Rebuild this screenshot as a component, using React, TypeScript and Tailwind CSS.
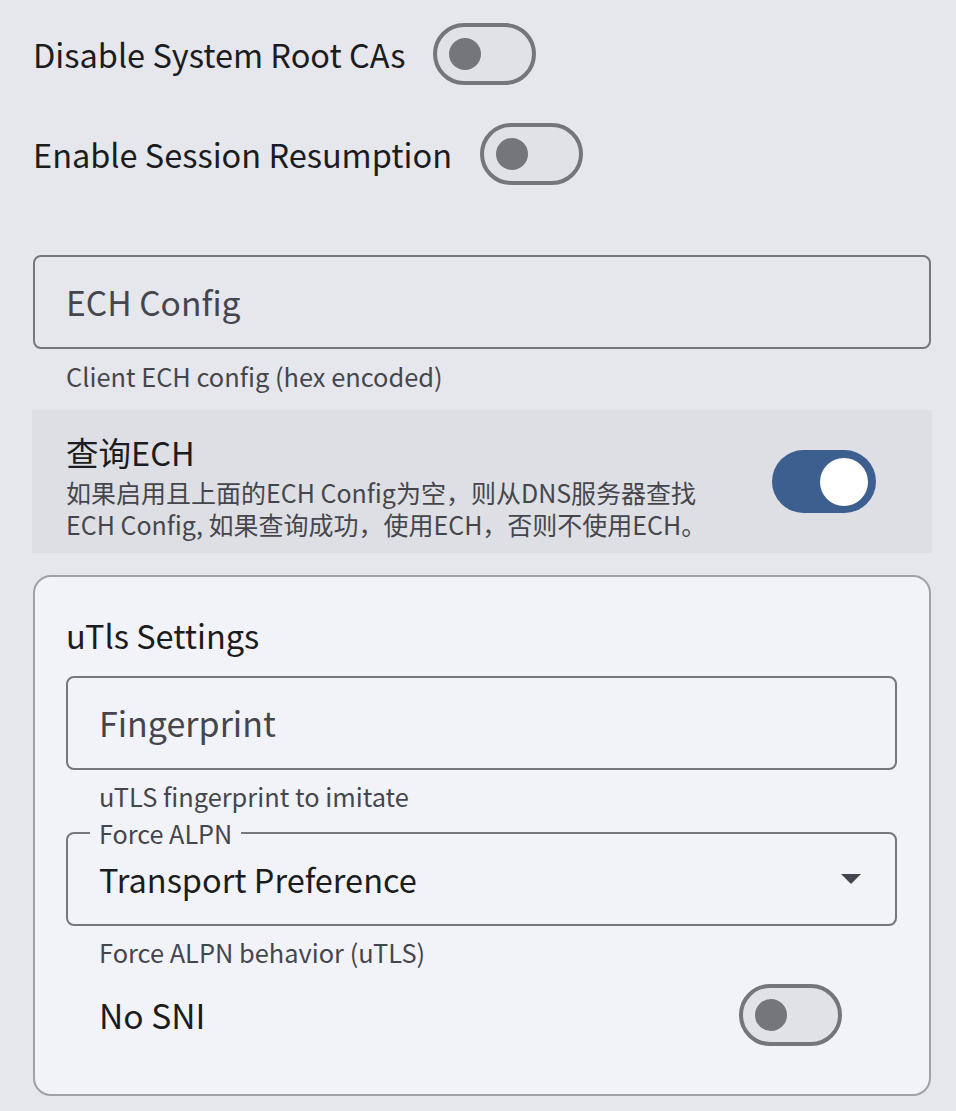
import React from "react";

const font = { fontFamily: '"Noto Sans CJK SC", "Noto Sans", sans-serif' };

function Switch({ on }: { on?: boolean }) {
  if (on) {
    return (
      <div className="w-[104px] h-[63px] rounded-full bg-[#3d5f8f] flex items-center justify-end pr-[8px] shrink-0">
        <div className="w-[48px] h-[48px] rounded-full bg-white" />
      </div>
    );
  }
  return (
    <div className="w-[103px] h-[62px] rounded-full border-[4px] border-[#75767b] bg-[#e1e2e7] flex items-center pl-[12px] shrink-0">
      <div className="w-[32px] h-[32px] rounded-full bg-[#75767b]" />
    </div>
  );
}

function TextField({ label, helper }: { label: string; helper: string }) {
  return (
    <div className="flex flex-col">
      <div className="h-[94px] rounded-[8px] border-[2.6px] border-[#75777c] flex items-center pl-[31px]">
        <span className="text-[33.6px] text-[#45464d] leading-none">{label}</span>
      </div>
      <div className="pl-[33px] pt-[12px] text-[25.4px] text-[#45464c] leading-[30px]">{helper}</div>
    </div>
  );
}

export default function App() {
  return (
    <div style={font} className="w-[956px] h-[1111px] bg-[#e6e7ec] text-[#1b1c20] overflow-hidden">
      <div className="pl-[33px] pr-[25px] pt-[23px] flex flex-col">
        <div className="flex items-center gap-[28px] h-[62px]">
          <span className="text-[32.5px] leading-none">Disable System Root CAs</span>
          <Switch />
        </div>
        <div className="flex items-center gap-[28px] h-[62px] mt-[38px]">
          <span className="text-[32.5px] leading-none">Enable Session Resumption</span>
          <Switch />
        </div>

        <div className="mt-[70px]">
          <TextField label="ECH Config" helper="Client ECH config (hex encoded)" />
        </div>

        <div className="mt-[19px] -ml-[1px] -mr-[1px] h-[143px] bg-[#dedfe4] flex justify-between pl-[34px] pr-[56px]">
          <div className="flex flex-col pt-[22px]">
            <span className="text-[32.5px] leading-[40px]">查询ECH</span>
            <span className="text-[25px] leading-[32px] text-[#45464c] mt-[4px]">
              如果启用且上面的ECH Config为空，则从DNS服务器查找
              <br />
              ECH Config, 如果查询成功，使用ECH，否则不使用ECH。
            </span>
          </div>
          <div className="self-center">
            <Switch on />
          </div>
        </div>

        <div className="mt-[22px] h-[521px] rounded-[18px] border-[2.6px] border-[#a0a1a6] bg-[#f2f3f8] pl-[31px] pr-[32px] pt-[36px] flex flex-col">
          <span className="text-[32.5px] leading-[44px]">uTls Settings</span>
          <div className="mt-[19px]">
            <div className="flex flex-col">
              <div className="h-[94px] rounded-[8px] border-[2.6px] border-[#75777c] flex items-center pl-[31px]">
                <span className="text-[34px] text-[#45464d] leading-none">Fingerprint</span>
              </div>
              <div className="pl-[33px] pt-[11px] text-[25.4px] text-[#45464c] leading-[30px]">uTLS fingerprint to imitate</div>
            </div>
          </div>

          <div className="mt-[21px] relative h-[94px] rounded-[8px] border-[2.6px] border-[#75777c] flex items-center pl-[31px] pr-[34px] justify-between">
            <span className="absolute -top-[16px] left-[22px] px-[9px] bg-[#f2f3f8] text-[25.2px] leading-[30px] text-[#45464c]">
              Force ALPN
            </span>
            <span className="text-[32.5px] leading-none">Transport Preference</span>
            <svg width="20" height="10" viewBox="0 0 20 10">
              <path d="M0 0 L20 0 L10 10 Z" fill="#45464d" />
            </svg>
          </div>
          <div className="pl-[33px] pt-[11px] text-[25.4px] text-[#45464c] leading-[30px]">Force ALPN behavior (uTLS)</div>

          <div className="mt-[17px] flex items-center justify-between pl-[33px] pr-[55px]">
            <span className="text-[33.6px] leading-none">No SNI</span>
            <Switch />
          </div>
        </div>
      </div>
    </div>
  );
}
